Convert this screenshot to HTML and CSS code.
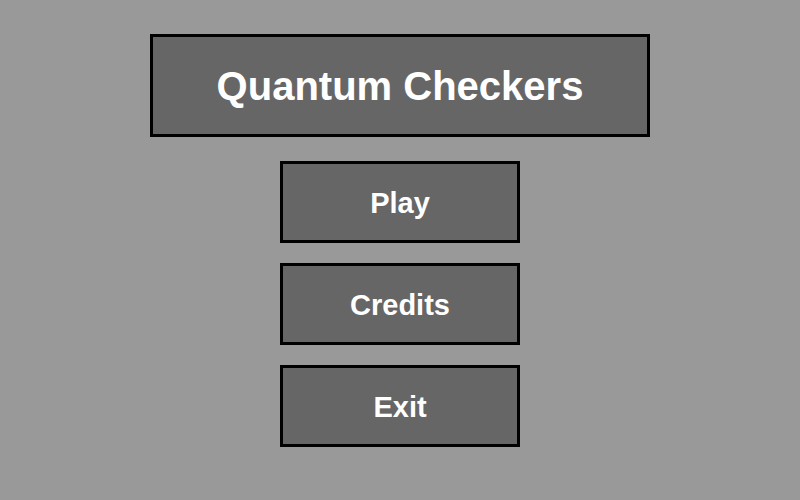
FILE: index.html
```html
<!DOCTYPE html>
<html>
<head>
<meta charset="utf-8">
<link rel="stylesheet" href="styles.css">
</head>
<body>
<main class="menu">
  <h1 class="title">Quantum Checkers</h1>
  <div class="buttons">
    <button class="btn">Play</button>
    <button class="btn">Credits</button>
    <button class="btn">Exit</button>
  </div>
</main>
</body>
</html>
```
FILE: styles.css
```css
html, body {
  margin: 0;
  padding: 0;
  background: #999999;
  width: 800px;
  height: 500px;
  overflow: hidden;
  font-family: "Liberation Sans", Arial, sans-serif;
}
.menu {
  display: flex;
  flex-direction: column;
  align-items: center;
  padding-top: 34px;
}
.title {
  box-sizing: border-box;
  width: 500px;
  height: 103px;
  margin: 0;
  background: #666666;
  border: 3px solid #000;
  color: #fff;
  font-size: 40px;
  font-weight: bold;
  display: flex;
  align-items: center;
  justify-content: center;
  padding-top: 1px;
}
.buttons {
  display: flex;
  flex-direction: column;
  gap: 20px;
  margin-top: 24px;
}
.btn {
  box-sizing: border-box;
  width: 240px;
  height: 82px;
  background: #666666;
  border: 3px solid #000;
  color: #fff;
  font-family: "Liberation Sans", Arial, sans-serif;
  font-size: 29px;
  font-weight: bold;
  padding: 2px 0 0 0;
  margin: 0;
}
```
